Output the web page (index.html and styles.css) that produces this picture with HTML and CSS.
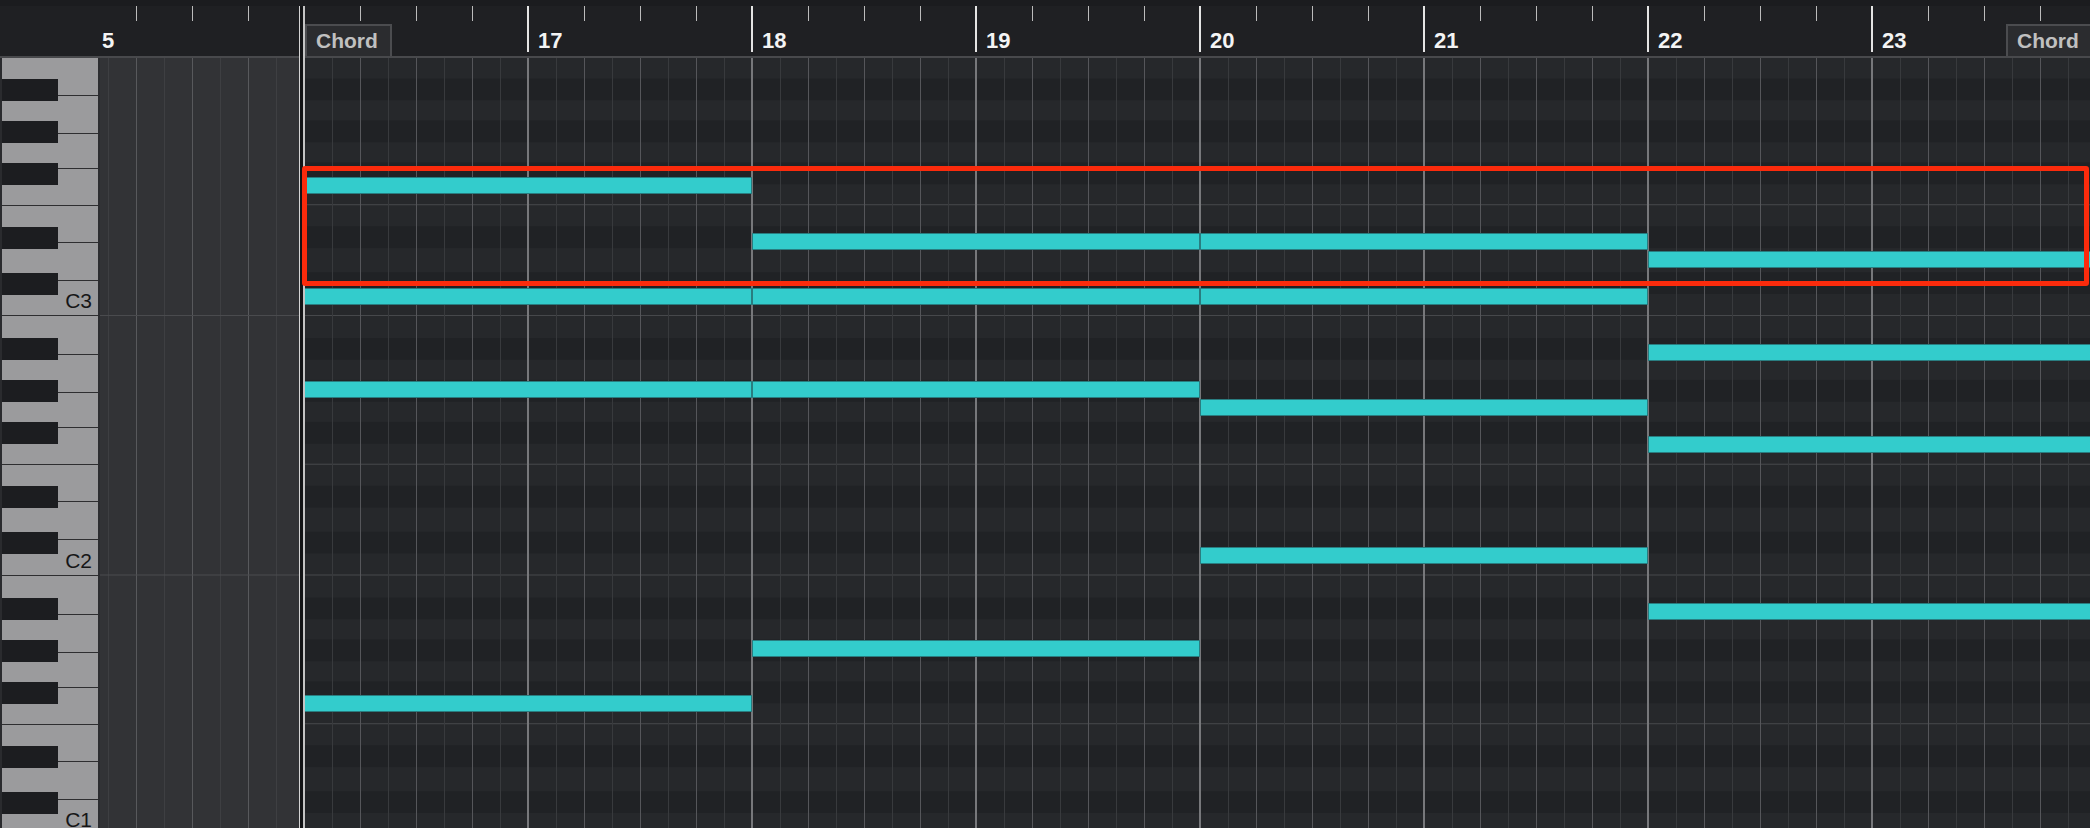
FILE: index.html
```html
<!DOCTYPE html>
<html lang="en">
<head>
    <meta charset="UTF-8">
    <meta name="viewport" content="width=device-width, initial-scale=1.0">
    <title>Key Editor</title>
    <link rel="stylesheet" href="styles.css">
</head>
<body>
    <div class="editor">
        <header class="ruler">
            <div class="ruler-keys"></div>
            <div class="ruler-pre"><span class="bar-num">5</span></div>
            <div class="ruler-bar"><span class="marker marker-start">Chord</span></div>
            <div class="ruler-bar"><span class="bar-num">17</span></div>
            <div class="ruler-bar"><span class="bar-num">18</span></div>
            <div class="ruler-bar"><span class="bar-num">19</span></div>
            <div class="ruler-bar"><span class="bar-num">20</span></div>
            <div class="ruler-bar"><span class="bar-num">21</span></div>
            <div class="ruler-bar"><span class="bar-num">22</span></div>
            <div class="ruler-bar"><span class="bar-num">23</span><span class="marker marker-end">Chord</span></div>
        </header>

        <main class="body">
            <aside class="keys">
                <div class="octave"><span class="octave-label">C3</span></div>
                <div class="octave"><span class="octave-label">C2</span></div>
                <div class="octave"><span class="octave-label">C1</span></div>
            </aside>

            <div class="lane-pre"></div>

            <div class="part">
                <!-- --t = two-bar slot from bar 16, --r = row from the top note -->
                <div class="note" style="--t:0;--r:0"></div>
                <div class="note" style="--t:1;--r:3"></div>
                <div class="note" style="--t:2;--r:3"></div>
                <div class="note" style="--t:3;--r:4"></div>
                <div class="note" style="--t:0;--r:6"></div>
                <div class="note" style="--t:1;--r:6"></div>
                <div class="note" style="--t:2;--r:6"></div>
                <div class="note" style="--t:3;--r:9"></div>
                <div class="note" style="--t:0;--r:11"></div>
                <div class="note" style="--t:1;--r:11"></div>
                <div class="note" style="--t:2;--r:12"></div>
                <div class="note" style="--t:3;--r:14"></div>
                <div class="note" style="--t:2;--r:20"></div>
                <div class="note" style="--t:3;--r:23"></div>
                <div class="note" style="--t:1;--r:25"></div>
                <div class="note" style="--t:0;--r:28"></div>

                <div class="selection"></div>
            </div>
        </main>

        <div class="playhead"></div>
    </div>
</body>
</html>
```

FILE: styles.css
```css
* {
    box-sizing: border-box;
}

body {
    margin: 0;
    background: #1f2023;
    font-family: 'Liberation Sans', Arial, sans-serif;
    overflow: hidden;
}

.editor {
    position: relative;
    width: 2090px;
    height: 828px;
    overflow: hidden;
    display: flex;
    flex-direction: column;
}

/* ruler */

.ruler {
    display: flex;
    flex: none;
    height: 58px;
    background: linear-gradient(#1b1c1f 0 6px, #1f2023 6px);
    border-bottom: 2px solid #48494c;
}

.ruler-keys {
    width: 98px;
    flex: none;
}

.ruler-pre {
    width: 205px;
    flex: none;
    padding: 28px 0 0 4px;
    background: repeating-linear-gradient(90deg, transparent 0 38px, #bcbcbc 38px 39px, transparent 39px 56px) 0 6px / 100% 15px no-repeat;
}

.ruler-bar {
    position: relative;
    width: 224px;
    flex: none;
    padding: 28px 0 0 11px;
    background:
        linear-gradient(#e4e4e4, #e4e4e4) 0 6px / 2px 46px no-repeat,
        repeating-linear-gradient(90deg, transparent 0 1px, #bcbcbc 1px 2px, transparent 2px 56px) 0 6px / 100% 15px no-repeat;
}

.bar-num {
    display: block;
    font-size: 22px;
    font-weight: bold;
    line-height: 26px;
    color: #f4f4f4;
}

.marker {
    position: absolute;
    top: 24px;
    height: 32px;
    padding: 0 12px 0 9px;
    background: #2b2c2f;
    border: 2px solid #4b4c4f;
    border-bottom: 0;
    color: #c0c0c0;
    font-size: 21px;
    font-weight: bold;
    line-height: 30px;
}

.marker-start {
    left: 2px;
}

.marker-end {
    left: 135px;
}

/* keyboard + grid */

.body {
    display: flex;
    flex: 1;
    min-height: 0;
}

.keys {
    width: 100px;
    flex: none;
    background: #9b9b9d;
    border-left: 2px solid #2a2b2e;
    border-right: 2px solid #2c2d30;
}

.octave {
    height: 259.5px;
    display: flex;
    flex-direction: column;
    justify-content: flex-end;
    align-items: flex-end;
    padding: 0 6px 5px 0;
    background:
        linear-gradient(to bottom,
            transparent 22px, #1c1d20 22px 44px,
            transparent 44px 64px, #1c1d20 64px 86px,
            transparent 86px 106px, #1c1d20 106px 128px,
            transparent 128px 170px, #1c1d20 170px 192px,
            transparent 192px 216px, #1c1d20 216px 238px,
            transparent 238px) 0 0 / 56px 100% no-repeat,
        linear-gradient(to bottom,
            transparent 38px, #2e2e30 38px 39px,
            transparent 39px 76px, #2e2e30 76px 77px,
            transparent 77px 111px, #2e2e30 111px 112px,
            transparent 112px 148px, #2e2e30 148px 149px,
            transparent 149px 185px, #2e2e30 185px 186px,
            transparent 186px 223px, #2e2e30 223px 224px,
            transparent 224px calc(100% - 1px), #2e2e30 calc(100% - 1px));
}

.octave:first-child {
    margin-top: -1.5px;
}

.octave-label {
    font-size: 21px;
    line-height: 21px;
    color: #161617;
}

.lane-pre {
    width: 204px;
    flex: none;
    background:
        linear-gradient(to bottom, transparent calc(100% - 1px), #4a4b4e calc(100% - 1px)) 0 -1.5px / 100% 259.5px,
        repeating-linear-gradient(90deg, transparent 0 36px, #58595c 36px 37px, transparent 37px 56px),
        repeating-linear-gradient(90deg, transparent 0 8px, #3e3f42 8px 9px, transparent 9px 28px),
        #323336;
}

.part {
    position: relative;
    flex: 1;
    background:
        repeating-linear-gradient(90deg, #77787b 0 1px, transparent 1px 223px, #77787b 223px 224px),
        repeating-linear-gradient(90deg, #55565a 0 1px, transparent 1px 56px),
        repeating-linear-gradient(90deg, transparent 0 28px, #383a3d 28px 29px, transparent 29px 56px),
        linear-gradient(to bottom,
            transparent 148px, #46484b 148px 149px,
            transparent 149px calc(100% - 1px), #46484b calc(100% - 1px)) 0 -1.5px / 100% 259.5px,
        linear-gradient(to bottom,
            transparent 22px, #202225 22px 44px,
            transparent 44px 64px, #202225 64px 86px,
            transparent 86px 106px, #202225 106px 128px,
            transparent 128px 170px, #202225 170px 192px,
            transparent 192px 216px, #202225 216px 238px,
            transparent 238px) 0 -1.5px / 100% 259.5px,
        #26282b;
}

.note {
    position: absolute;
    left: calc(var(--t) * 448px);
    top: calc(119px + var(--r) * 18.5px);
    width: 448px;
    height: 17px;
    background: #33cccc;
    border: 1px solid #297d80;
}

.selection {
    position: absolute;
    left: -2px;
    top: 108px;
    width: 1787px;
    height: 120px;
    border: 5px solid #fb2b0c;
    border-radius: 3px;
    z-index: 3;
}

.playhead {
    position: absolute;
    left: 299px;
    top: 6px;
    bottom: 0;
    width: 6px;
    background: linear-gradient(90deg, #d4d4d4 0 1px, #121315 1px 4px, #c4c4c4 4px 6px);
    z-index: 2;
}
```
